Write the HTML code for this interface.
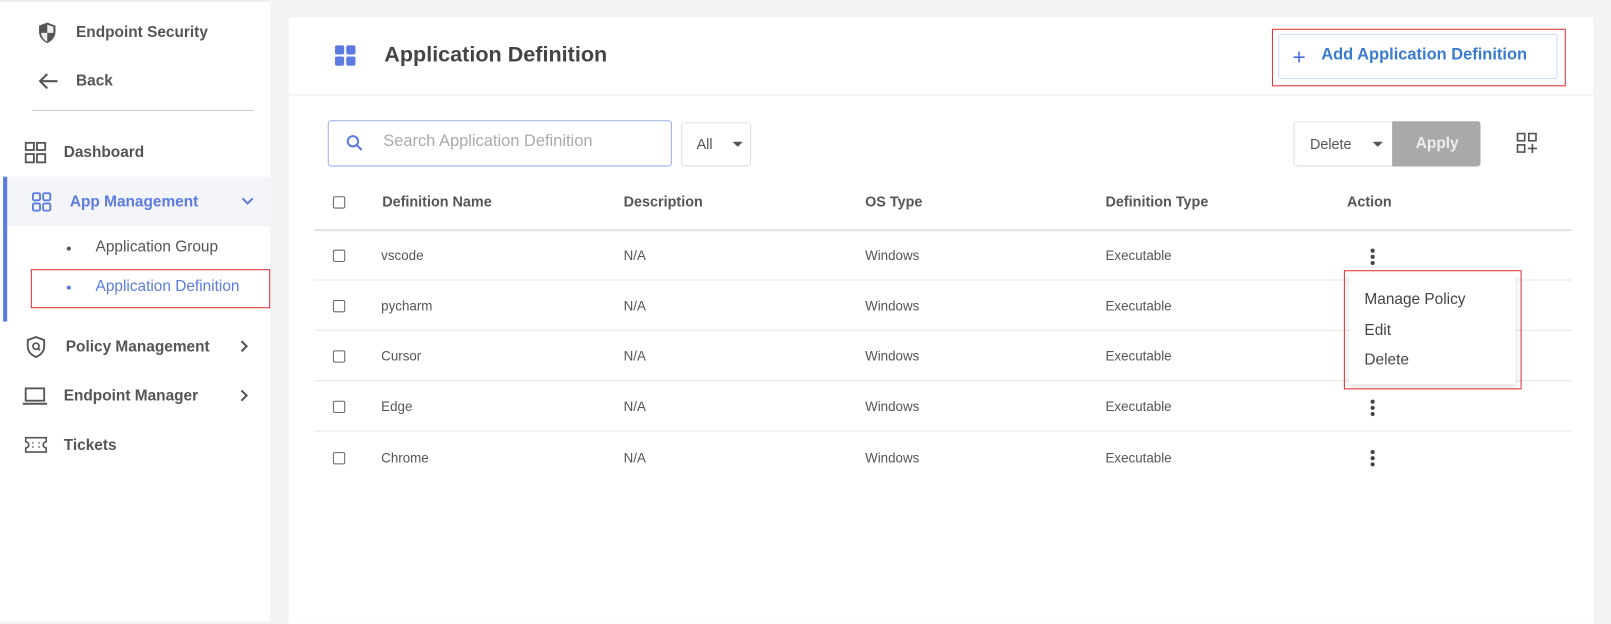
<!DOCTYPE html>
<html><head><style>
*{box-sizing:border-box;margin:0;padding:0}
body{width:1611px;height:621px;overflow:hidden;background:#f3f3f5;font-family:"Liberation Sans",sans-serif;color:#444}
#w{position:absolute;left:0;top:0;width:1568px;height:605px;transform:scale(1.02742);transform-origin:0 0}
.a{position:absolute}
.side{left:0;top:0;width:263px;height:605px;background:#fff}
.main{left:281px;top:17px;width:1270px;height:590px;background:#fff}
.nav{font-weight:bold;font-size:15px;color:#555}
.hdr{font-size:14px;font-weight:bold;color:#555}
.cell{font-size:13px;color:#555}
.cb{width:12px;height:12px;border:1.5px solid #666;border-radius:2px}
.line{height:1px;background:#e6e6e6;left:306px;width:1224px}
.dots{width:4px}
.dots i{display:block;width:4px;height:4px;border-radius:2px;background:#444;margin-bottom:2px}
</style></head><body><div id="w">
<div class="a side"></div>
<div class="a" style="left:0;top:0;width:263px;height:2px;background:#eee"></div>
<svg class="a" style="left:36px;top:21px" width="20" height="22" viewBox="0 0 20 22"><path d="M10 1L2 4v6c0 5 3.5 9 8 11 4.5-2 8-6 8-11V4z" fill="#555"/><path d="M10 3v8H4c.3 4 2.8 7 6 8.5V11h6V5z" fill="#fff" opacity=".9"/></svg>
<div class="a nav" style="left:74px;top:23px">Endpoint Security</div>
<svg class="a" style="left:37px;top:70px" width="20" height="18"><path d="M19 9H3M9 2L2 9l7 7" stroke="#555" stroke-width="2" fill="none"/></svg>
<div class="a nav" style="left:74px;top:70px">Back</div>
<div class="a" style="left:31px;top:107px;width:216px;height:1px;background:#ccc"></div>
<svg class="a" style="left:24px;top:138px" width="22" height="22"><g fill="none" stroke="#555" stroke-width="1.8"><rect x="1" y="1" width="8" height="7"/><rect x="12" y="1" width="8" height="7"/><rect x="1" y="12" width="8" height="8"/><rect x="12" y="12" width="8" height="8"/></g></svg>
<div class="a nav" style="left:62px;top:140px">Dashboard</div>
<div class="a" style="left:3px;top:172px;width:260px;height:48px;background:#f4f5fb"></div>
<div class="a" style="left:3px;top:172px;width:4px;height:141px;background:#5b7be0"></div>
<svg class="a" style="left:31px;top:187px" width="20" height="20"><g fill="none" stroke="#5b7be0" stroke-width="1.8"><rect x="1" y="1" width="7" height="7" rx="1.5"/><rect x="11" y="1" width="7" height="7" rx="1.5"/><rect x="1" y="11" width="7" height="7" rx="1.5"/><rect x="11" y="11" width="7" height="7" rx="1.5"/></g></svg>
<div class="a nav" style="left:68px;top:188px;color:#5b7be0">App Management</div>
<svg class="a" style="left:235px;top:192px" width="12" height="8"><path d="M1 1l5 5 5-5" stroke="#5b7be0" stroke-width="2" fill="none"/></svg>
<div class="a" style="left:65px;top:240px;width:4px;height:4px;border-radius:2px;background:#555"></div>
<div class="a" style="left:93px;top:232px;font-size:15px;color:#555">Application Group</div>
<div class="a" style="left:30px;top:262px;width:233px;height:38px;border:1.5px solid #e03030"></div>
<div class="a" style="left:65px;top:278px;width:4px;height:4px;border-radius:2px;background:#5b7be0"></div>
<div class="a" style="left:93px;top:270px;font-size:15px;color:#5b7be0">Application Definition</div>
<svg class="a" style="left:24px;top:327px" width="22" height="22"><path d="M11 1L3 4v6c0 5 3.5 8.5 8 10.5 4.5-2 8-5.5 8-10.5V4z" fill="none" stroke="#555" stroke-width="1.8"/><circle cx="11" cy="10" r="3" fill="none" stroke="#555" stroke-width="1.6"/><path d="M13 12l2 2" stroke="#555" stroke-width="1.6"/></svg>
<div class="a nav" style="left:64px;top:329px">Policy Management</div>
<svg class="a" style="left:234px;top:331px" width="8" height="12"><path d="M1 1l5 5-5 5" stroke="#555" stroke-width="2" fill="none"/></svg>
<svg class="a" style="left:22px;top:377px" width="24" height="18"><rect x="3" y="1" width="18" height="12" fill="none" stroke="#555" stroke-width="1.8"/><path d="M0 16h24" stroke="#555" stroke-width="2"/></svg>
<div class="a nav" style="left:62px;top:377px">Endpoint Manager</div>
<svg class="a" style="left:234px;top:379px" width="8" height="12"><path d="M1 1l5 5-5 5" stroke="#555" stroke-width="2" fill="none"/></svg>
<svg class="a" style="left:24px;top:425px" width="22" height="16"><path d="M1 1h20v4a3 3 0 000 6v4H1v-4a3 3 0 000-6z" fill="none" stroke="#555" stroke-width="1.6"/><path d="M8 5v6M14 5v6" stroke="#555" stroke-dasharray="2 2"/></svg>
<div class="a nav" style="left:62px;top:425px">Tickets</div>

<div class="a main"></div>
<div class="a" style="left:281px;top:92px;width:1270px;height:1px;background:#eee"></div>
<svg class="a" style="left:326px;top:44px" width="22" height="22"><g fill="#5b7be0"><rect x="0" y="0" width="9" height="9" rx="2"/><rect x="11" y="0" width="9" height="9" rx="2"/><rect x="0" y="11" width="9" height="9" rx="2"/><rect x="11" y="11" width="9" height="9" rx="2"/></g></svg>
<div class="a" style="left:374px;top:42px;font-size:21px;font-weight:bold;color:#444">Application Definition</div>
<div class="a" style="left:1238px;top:28px;width:286px;height:56px;border:1.5px solid #e03030"></div>
<div class="a" style="left:1244px;top:33px;width:272px;height:44px;border:1px solid #c8daf0;border-radius:3px"></div>
<div class="a" style="left:1258px;top:43px;font-size:22px;color:#4a6fe0">+</div>
<div class="a" style="left:1286px;top:45px;font-size:16px;font-weight:bold;color:#3a7bd0">Add Application Definition</div>

<div class="a" style="left:319px;top:117px;width:335px;height:45px;border:1px solid #9bb0ea;border-radius:3px"></div>
<svg class="a" style="left:337px;top:131px" width="16" height="16"><circle cx="6.5" cy="6.5" r="5" stroke="#5b7be0" stroke-width="2" fill="none"/><path d="M10 10l5 5" stroke="#5b7be0" stroke-width="2"/></svg>
<div class="a" style="left:373px;top:129px;font-size:16px;color:#aaa">Search Application Definition</div>
<div class="a" style="left:663px;top:119px;width:68px;height:43px;border:1px solid #ddd;border-radius:3px"></div>
<div class="a" style="left:678px;top:132px;font-size:14px;color:#555">All</div>
<div class="a" style="left:713px;top:138px;border:5px solid transparent;border-top-color:#555"></div>
<div class="a" style="left:1259px;top:118px;width:97px;height:44px;border:1px solid #ddd;border-right:none;border-radius:3px 0 0 3px"></div>
<div class="a" style="left:1275px;top:132px;font-size:14px;color:#555">Delete</div>
<div class="a" style="left:1336px;top:138px;border:5px solid transparent;border-top-color:#555"></div>
<div class="a" style="left:1355px;top:118px;width:86px;height:44px;background:#a8a9ab;border-radius:0 3px 3px 0"></div>
<div class="a" style="left:1378px;top:131px;font-size:15px;font-weight:bold;color:#eee">Apply</div>
<svg class="a" style="left:1476px;top:129px" width="22" height="22"><g fill="none" stroke="#555" stroke-width="1.6"><rect x="1" y="1" width="7" height="7"/><rect x="12" y="1" width="7" height="7"/><rect x="1" y="12" width="7" height="7"/><path d="M15.5 11v9M11 15.5h9"/></g></svg>

<div class="a cb" style="left:324px;top:191px"></div>
<div class="a hdr" style="left:372px;top:188px">Definition Name</div>
<div class="a hdr" style="left:607px;top:188px">Description</div>
<div class="a hdr" style="left:842px;top:188px">OS Type</div>
<div class="a hdr" style="left:1076px;top:188px">Definition Type</div>
<div class="a hdr" style="left:1311px;top:188px">Action</div>
<div class="a line" style="top:223px;height:2px;background:#e2e2e2"></div>

<div class="a cb" style="left:324px;top:243px"></div><div class="a cell" style="left:371px;top:241px">vscode</div><div class="a cell" style="left:607px;top:241px">N/A</div><div class="a cell" style="left:842px;top:241px">Windows</div><div class="a cell" style="left:1076px;top:241px">Executable</div><div class="a dots" style="left:1334px;top:242px"><i></i><i></i><i></i></div>
<div class="a line" style="top:272px"></div>
<div class="a cb" style="left:324px;top:292px"></div><div class="a cell" style="left:371px;top:290px">pycharm</div><div class="a cell" style="left:607px;top:290px">N/A</div><div class="a cell" style="left:842px;top:290px">Windows</div><div class="a cell" style="left:1076px;top:290px">Executable</div>
<div class="a line" style="top:321px"></div>
<div class="a cb" style="left:324px;top:341px"></div><div class="a cell" style="left:371px;top:339px">Cursor</div><div class="a cell" style="left:607px;top:339px">N/A</div><div class="a cell" style="left:842px;top:339px">Windows</div><div class="a cell" style="left:1076px;top:339px">Executable</div>
<div class="a line" style="top:370px"></div>
<div class="a cb" style="left:324px;top:390px"></div><div class="a cell" style="left:371px;top:388px">Edge</div><div class="a cell" style="left:607px;top:388px">N/A</div><div class="a cell" style="left:842px;top:388px">Windows</div><div class="a cell" style="left:1076px;top:388px">Executable</div><div class="a dots" style="left:1334px;top:389px"><i></i><i></i><i></i></div>
<div class="a line" style="top:419px"></div>
<div class="a cb" style="left:324px;top:440px"></div><div class="a cell" style="left:371px;top:438px">Chrome</div><div class="a cell" style="left:607px;top:438px">N/A</div><div class="a cell" style="left:842px;top:438px">Windows</div><div class="a cell" style="left:1076px;top:438px">Executable</div><div class="a dots" style="left:1334px;top:438px"><i></i><i></i><i></i></div>

<div class="a" style="left:1313px;top:266px;width:162px;height:108px;background:#fff;box-shadow:0 2px 6px rgba(0,0,0,.15)"></div>
<div class="a" style="left:1308px;top:263px;width:173px;height:116px;border:1.5px solid #e03030"></div>
<div class="a" style="left:1328px;top:283px;font-size:15px;color:#444">Manage Policy</div>
<div class="a" style="left:1328px;top:313px;font-size:15px;color:#444">Edit</div>
<div class="a" style="left:1328px;top:342px;font-size:15px;color:#444">Delete</div>
</div></body></html>
